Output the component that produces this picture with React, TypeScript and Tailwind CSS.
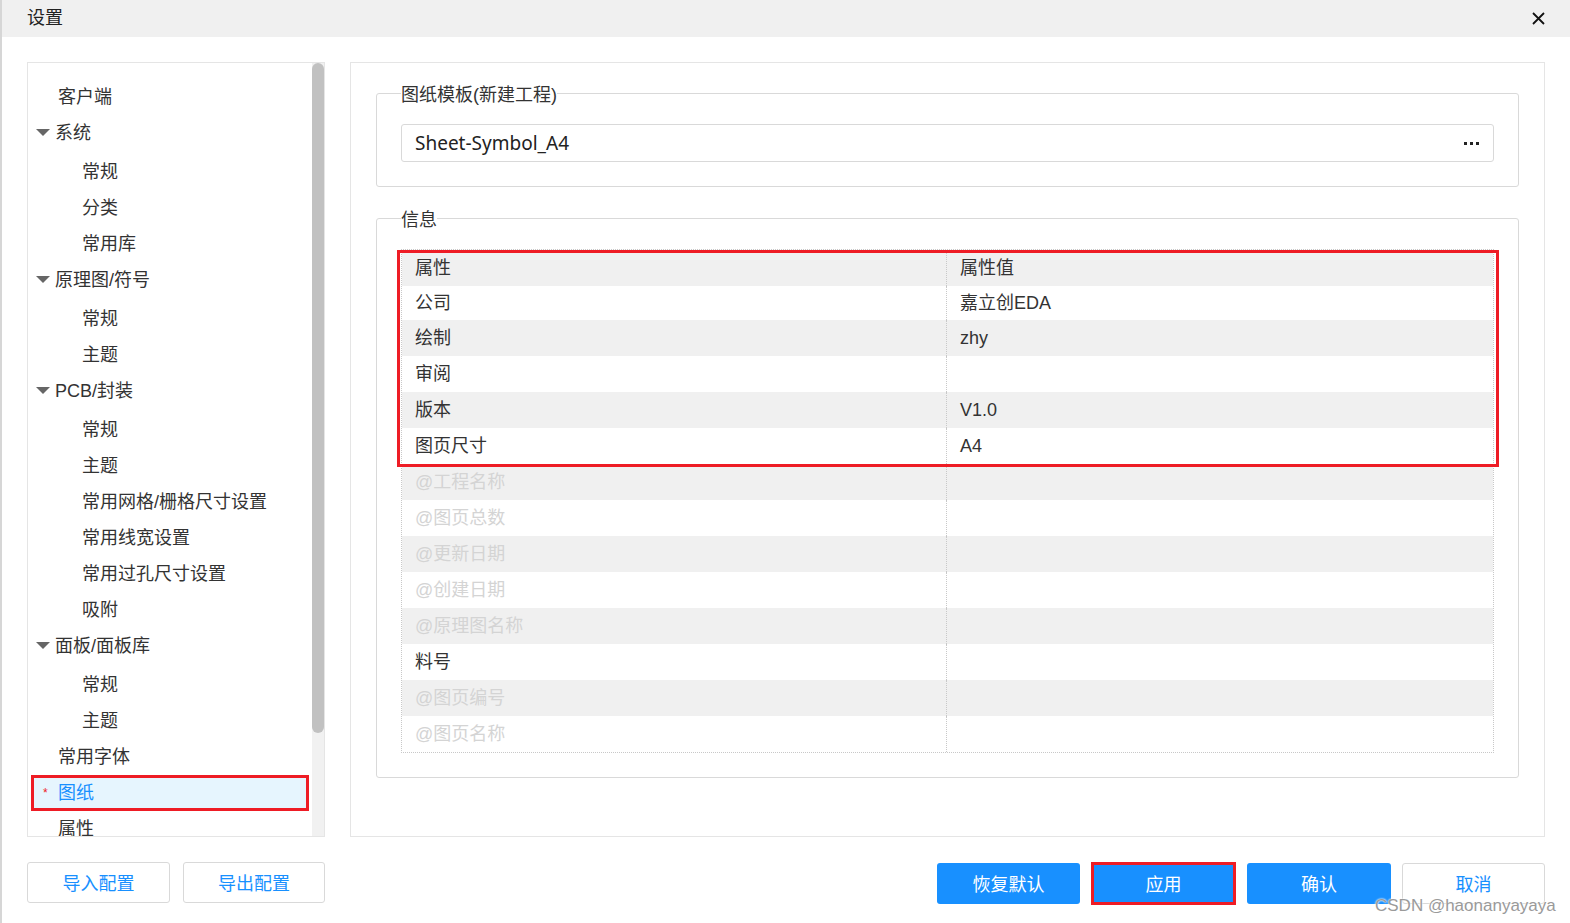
import React from 'react';

type TreeItem = { label: string; level: 0 | 1; caret?: boolean; selected?: boolean };

const tree: TreeItem[] = [
  { label: '客户端', level: 0 },
  { label: '系统', level: 0, caret: true },
  { label: '常规', level: 1 },
  { label: '分类', level: 1 },
  { label: '常用库', level: 1 },
  { label: '原理图/符号', level: 0, caret: true },
  { label: '常规', level: 1 },
  { label: '主题', level: 1 },
  { label: 'PCB/封装', level: 0, caret: true },
  { label: '常规', level: 1 },
  { label: '主题', level: 1 },
  { label: '常用网格/栅格尺寸设置', level: 1 },
  { label: '常用线宽设置', level: 1 },
  { label: '常用过孔尺寸设置', level: 1 },
  { label: '吸附', level: 1 },
  { label: '面板/面板库', level: 0, caret: true },
  { label: '常规', level: 1 },
  { label: '主题', level: 1 },
  { label: '常用字体', level: 0 },
  { label: '图纸', level: 0, selected: true },
  { label: '属性', level: 0 },
];

const rows: { key: string; value: string; muted?: boolean }[] = [
  { key: '属性', value: '属性值' },
  { key: '公司', value: '嘉立创EDA' },
  { key: '绘制', value: 'zhy' },
  { key: '审阅', value: '' },
  { key: '版本', value: 'V1.0' },
  { key: '图页尺寸', value: 'A4' },
  { key: '@工程名称', value: '', muted: true },
  { key: '@图页总数', value: '', muted: true },
  { key: '@更新日期', value: '', muted: true },
  { key: '@创建日期', value: '', muted: true },
  { key: '@原理图名称', value: '', muted: true },
  { key: '料号', value: '' },
  { key: '@图页编号', value: '', muted: true },
  { key: '@图页名称', value: '', muted: true },
];

const Caret = () => (
  <svg width="14" height="8" viewBox="0 0 14 8" className="shrink-0 -mt-[2px]">
    <path d="M0 0 L14 0 L7 7 Z" fill="#666" />
  </svg>
);

export default function App() {
  return (
    <div className="relative w-[1570px] h-[923px] bg-white border-l-2 border-[#d6d6d6] flex flex-col font-['Liberation_Sans','Noto_Sans_CJK_SC',sans-serif] text-[#333] overflow-hidden">
      {/* Title bar */}
      <div className="h-[37px] shrink-0 bg-[#f0f0f0] flex items-center justify-between pl-[25px] pr-[25px]">
        <span className="text-[18px] text-[#222]">设置</span>
        <svg width="13" height="13" viewBox="0 0 13 13">
          <path d="M1 1 L12 12 M12 1 L1 12" stroke="#111" strokeWidth="1.8" />
        </svg>
      </div>

      {/* Body */}
      <div className="flex gap-[25px] px-[25px] pt-[25px] h-[800px] shrink-0">
        {/* Left tree panel */}
        <div className="w-[298px] h-[775px] border border-[#e5e5e5] flex overflow-hidden">
          <div className="flex-1 pt-[16px] overflow-hidden">
            {tree.map((item, i) =>
              item.selected ? (
                <div
                  key={i}
                  className="h-[36px] mx-[3px] border-[3px] border-[#ee1c25] bg-[#e6f5fe] flex items-center pl-[9px] text-[18px] text-[#1890ff]"
                >
                  <span className="text-[#ee1c25] text-[12px] w-[15px]">*</span>
                  <span>{item.label}</span>
                </div>
              ) : (
                <div
                  key={i}
                  className={
                    item.level === 1
                      ? 'h-[36px] flex items-center pl-[54px] text-[18px]'
                      : item.caret
                        ? 'h-[39px] flex items-center pl-[8px] gap-[5px] text-[18px] pb-[2px]'
                        : 'h-[36px] flex items-center pl-[30px] text-[18px]'
                  }
                >
                  {item.caret && <Caret />}
                  <span className="whitespace-nowrap">{item.label}</span>
                </div>
              )
            )}
          </div>
          <div className="w-[12px] bg-[#f1f1f1] shrink-0">
            <div className="h-[670px] bg-[#c1c1c1] rounded-full" />
          </div>
        </div>

        {/* Right panel */}
        <div className="flex-1 h-[775px] border border-[#e5e5e5] pt-[15px] px-[25px]">
          <fieldset className="border border-[#d9d9d9] rounded-[3px] px-[24px] pt-[16px] pb-[24px]">
            <legend className="text-[18px] leading-[26px] pt-[4px] text-[#333]">图纸模板(新建工程)</legend>
            <div className="h-[38px] border border-[#d9d9d9] rounded-[3px] flex items-center justify-between pl-[13px] pr-[14px]">
              <span className="text-[19px] font-['Noto_Sans',sans-serif] text-[#222]">Sheet-Symbol_A4</span>
              <span className="flex gap-[3px]">
                <span className="w-[3px] h-[3px] bg-[#222]" />
                <span className="w-[3px] h-[3px] bg-[#222]" />
                <span className="w-[3px] h-[3px] bg-[#222]" />
              </span>
            </div>
          </fieldset>

          <fieldset className="mt-[16px] border border-[#d9d9d9] rounded-[3px] px-[24px] pt-[16px] pb-[24px]">
            <legend className="text-[18px] leading-[26px] pt-[4px] text-[#333]">信息</legend>
            <div className="relative border border-dotted border-[#c8c8c8]">
              {rows.map((r, i) => (
                <div
                  key={i}
                  className={
                    (i === 1 ? 'h-[34px] ' : 'h-[36px] ') +
                    (i % 2 === 0 ? 'flex bg-[#f0f0f0] text-[18px]' : 'flex bg-white text-[18px]')
                  }
                >
                  <div
                    className={
                      r.muted
                        ? 'w-[545px] border-r border-dotted border-[#c8c8c8] flex items-center pl-[13px] text-[#d4d4d4]'
                        : 'w-[545px] border-r border-dotted border-[#c8c8c8] flex items-center pl-[13px]'
                    }
                  >
                    {r.key}
                  </div>
                  <div className="flex-1 flex items-center pl-[13px]">{r.value}</div>
                </div>
              ))}
              {/* red highlight annotation */}
              <div className="absolute left-[-5px] right-[-6px] top-[0px] h-[217px] border-[3px] border-[#ee1c25] pointer-events-none" />
            </div>
          </fieldset>
        </div>
      </div>

      {/* Footer buttons */}
      <div className="flex justify-between px-[25px] pt-[25px]">
        <div className="flex gap-[13px]">
          <button className="w-[143px] h-[41px] pt-[3px] border border-[#d9d9d9] rounded-[3px] bg-white text-[18px] text-[#1890ff]">导入配置</button>
          <button className="w-[142px] h-[41px] pt-[3px] border border-[#d9d9d9] rounded-[3px] bg-white text-[18px] text-[#1890ff]">导出配置</button>
        </div>
        <div className="flex gap-[11px] items-center">
          <button className="w-[143px] h-[41px] pt-[3px] rounded-[3px] bg-[#1890ff] text-[18px] text-white">恢复默认</button>
          <button className="w-[145px] h-[43px] pt-[3px] border-[3px] border-[#ee1c25] bg-[#1890ff] text-[18px] text-white">应用</button>
          <button className="w-[144px] h-[41px] pt-[3px] rounded-[3px] bg-[#1890ff] text-[18px] text-white">确认</button>
          <button className="w-[143px] h-[41px] pt-[3px] border border-[#d9d9d9] rounded-[3px] bg-white text-[18px] text-[#1890ff]">取消</button>
        </div>
      </div>

      {/* watermark */}
      <div className="absolute left-[1373px] top-[893px] text-[17px] text-[#9a9a9a] font-['Liberation_Sans',sans-serif] [text-shadow:0_0_2px_#fff,0_0_2px_#fff]">
        CSDN @haonanyayaya
      </div>
    </div>
  );
}
